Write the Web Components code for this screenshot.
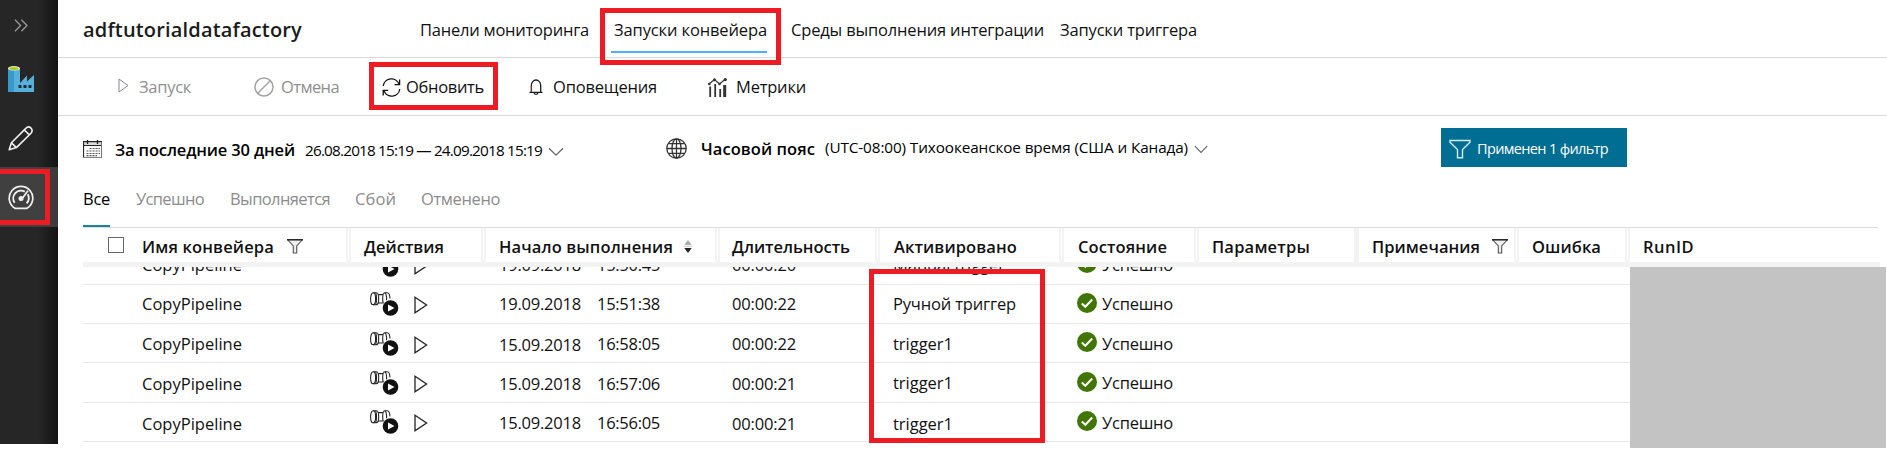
<!DOCTYPE html>
<html lang="ru">
<head>
<meta charset="utf-8">
<title>adftutorialdatafactory</title>
<style>
html,body{margin:0;height:451px;background:#fff;overflow:hidden}
body{font:16.5px/20px "Open Sans","Noto Sans",sans-serif;color:#111}
</style>
</head>
<body>
<adf-app></adf-app>
<script>
const ICONS = {
  expand: [14,13,'<path d="M1 .7l5.6 5.8L1 12.3M7.4.7l5.6 5.8-5.6 5.8" fill="none" stroke="#999" stroke-width="1.3"/>'],
  factory: [26,26,'<path d="M0 2h12v15l7-7.5v6L26 9v17H0z" fill="#55b1dc"/><path d="M0 2h6v24H0z" fill="#3a99cb"/><ellipse cx="6" cy="2.3" rx="6" ry="2.3" fill="#e6efe0"/><ellipse cx="6" cy="2.4" rx="4.6" ry="1.5" fill="#a8d108"/><path d="M10.5 19h3v3h-3zm5 0h3v3h-3zm5 0h3v3h-3z" fill="#1d2b33"/>'],
  pencil: [26,25,'<path d="M1.2 23.8l2.2-7L17.8 2.4c1.6-1.7 3.7-1.7 5.2-.3s1.5 3.6 0 5.100L8.400 21.600zM3.400 16.800l5 4.800M16.300 4l5.100 4.800" fill="none" stroke="#f0f0f0" stroke-width="1.600" stroke-linejoin="round"/>'],
  gauge: [26,25,'<path d="M7 23.300a11.800 11.800 0 1 1 12 0z" fill="none" stroke="#f0f0f0" stroke-width="1.700"/><path d="M6.600 17.800a7.800 7.800 0 0 1 10.200-11.200M19.800 9.300a7.800 7.800 0 0 1-1.200 9" fill="none" stroke="#f0f0f0" stroke-width="1.900"/><path d="M20 5.800l-6.200 8.200" stroke="#f0f0f0" stroke-width="1.800"/><circle cx="13" cy="13.600" r="2.500" fill="#f0f0f0"/>'],
  run: [11,15,'<path d="M1 1l9 6.500L1 14z" fill="none" stroke="#7f8a94" stroke-width="1"/>'],
  ban: [20,20,'<circle cx="10" cy="10" r="9" fill="none" stroke="#a3a3a3" stroke-width="1.500"/><path d="M3.800 16.200L16.200 3.800" stroke="#a3a3a3" stroke-width="1.400"/>'],
  refresh: [19,19,'<path d="M1.200 8A8.200 8.200 0 0 1 17 6.200M17.800 11A8.200 8.200 0 0 1 2 12.800M17.600 1.500v5.200h-5M1.200 17.500v-5.200h5" fill="none" stroke="#111" stroke-width="1.300"/>'],
  bell: [14,16,'<path d="M.5 13.300h13M2.300 13V6.600a4.700 5.600 0 0 1 9.400 0V13M5 13.800a2 1.500 0 0 0 4 0" fill="none" stroke="#1b1b2b" stroke-width="1.300"/><path d="M3 13V7" stroke="#f0a060" stroke-width=".5"/>'],
  metrics: [19,19,'<path d="M2.200 8.500V19M7.200 6V19M12.200 11V19" stroke="#333" stroke-width="1.800"/><path d="M16.700 7V19" stroke="#333" stroke-width="3"/><path d="M1 6l5.500-4.500L11.500 6 17.500 1" fill="none" stroke="#333" stroke-width="1.200"/><circle cx="6.500" cy="1.700" r="1.500" fill="#333"/><circle cx="11.500" cy="6" r="1.300" fill="#333"/><circle cx="17.300" cy="1.600" r="1.600" fill="#333"/><circle cx="1.300" cy="6" r="1.300" fill="#333"/>'],
  calendar: [19,18,'<path d="M0 2h19v3.500H0z" fill="#ddd"/><path d="M.5 17.500v-16M0 1.700h19M0 5.500h19" stroke="#222" stroke-width="1.200" fill="none"/><path d="M18.500 2v16M1 17.400h18" stroke="#777" fill="none"/><path d="M4.500 0v4M14.500 0v4" stroke="#222" stroke-width="1.400"/><path d="M6.500 8.500H17M3.500 11H17M3.500 13.500H17M3.500 15.700H14" stroke="#555" stroke-width="1.200" stroke-dasharray="2 1"/>'],
  globe: [21,21,'<g fill="none" stroke="#333" stroke-width="1.300"><circle cx="10.500" cy="10.500" r="9.700"/><ellipse cx="10.500" cy="10.500" rx="4.500" ry="9.700"/><path d="M10.500 1v19M1 10.500h19M2.500 5.700h16M2.500 15.300h16"/></g>'],
  chevron: [16,10,'<path d="M1 1.200l7 7 7-7" fill="none" stroke="#666" stroke-width="1.300"/>'],
  filterwhite: [22,20,'<path d="M1 1.500h20v1.700l-7.500 7.300v8.300h-5v-8.300L1 3.200z" fill="none" stroke="#d9ecf3" stroke-width="1.400"/>'],
  filter: [16,15,'<path d="M.8 1l5.500 6v7h3.400V7l5.500-6" fill="#ddd" fill-opacity=".5" stroke="#555" stroke-width="1.100"/><path d="M0 .8h16" stroke="#111" stroke-width="1.400"/>'],
  sort: [8,13,'<path d="M4 0l3.700 5H.3z" fill="#aaa"/><path d="M0 6.400h8" stroke="#ccc"/><path d="M.3 8h7.400L4 13z" fill="#222"/>'],
  activity: [29,25,'<g fill="none" stroke="#222" stroke-width="1.100"><ellipse cx="3.100" cy="6.800" rx="2.500" ry="6"/><path d="M3.100.8h3.200c1.600 0 2.400 3 2.400 6s-.8 6-2.400 6H3.100M5.700 1.200c1 1.400 1.200 9.200 0 11.200M8.700 2.600h4.500M8.700 11h4M15.600 12.800h-1.200c-1-.8-1.700-3-1.700-6s.7-6 1.900-6h2.700c1.500 0 2.500 2.700 2.700 5.600M14.900.9c1.500 1.200 1.900 4 1.600 7.500"/></g><circle cx="20.500" cy="16" r="8.600" fill="#fff"/><circle cx="20.500" cy="16" r="7.800" fill="#111"/><path d="M18 12.400l6.500 3.600-6.500 3.600z" fill="#fff"/>'],
  play: [14,18,'<path d="M1 1.200l11.600 7.800L1 16.800z" fill="none" stroke="#222" stroke-width="1.300"/>'],
  ok: [20,20,'<circle cx="10" cy="10" r="10" fill="#417505"/><path d="M4.800 10.500l3.500 3.300 6.900-7.300" fill="none" stroke="#fff" stroke-width="2"/>']
};

class AdfIcon extends HTMLElement {
  connectedCallback() {
    const [w,h,body] = ICONS[this.getAttribute('name')];
    const W = this.getAttribute('w') || w, H = this.getAttribute('h') || h;
    this.attachShadow({mode:'open'}).innerHTML =
      `<style>:host{display:block;flex:none;width:${W}px;height:${H}px}svg{display:block}</style>
       <svg width="${W}" height="${H}" viewBox="0 0 ${w} ${h}" preserveAspectRatio="none">${body}</svg>`;
  }
}

/* Single-line label that tracks its letters to fill the width given in "w". */
class AdfText extends HTMLElement {
  connectedCallback() {
    const w = +this.getAttribute('w');
    this.attachShadow({mode:'open'}).innerHTML =
      `<style>:host{display:block;flex:none;width:${w}px;height:20px;line-height:20px;white-space:nowrap}span{display:inline-block}</style><span><slot></slot></span>`;
    const span = this.shadowRoot.querySelector('span');
    const n = this.textContent.length;
    span.style.letterSpacing = ((w - span.getBoundingClientRect().width) / n).toFixed(3) + 'px';
  }
}

/* Red rectangle drawn over the content it marks. */
class AdfCallout extends HTMLElement {
  connectedCallback() {
    this.attachShadow({mode:'open'}).innerHTML =
      '<style>:host{position:absolute;box-sizing:border-box;border:5px solid #ed1c24;z-index:5;pointer-events:none}</style>';
  }
}

const define = (name, html) => customElements.define(name, class extends HTMLElement {
  connectedCallback() { this.attachShadow({mode:'open'}).innerHTML = html; }
});

define('adf-sidebar', `
<style>
:host{display:block;position:relative;width:58px;height:444px;background:linear-gradient(90deg,#262626 38px,#191919 52px,#141414)}
nav{display:flex;flex-direction:column}
.i{box-sizing:border-box;padding-left:8px}
.a{background:linear-gradient(90deg,#404040 40px,#3a3a3a)}
adf-callout{left:-5px;top:169px;width:55px;height:56px}
</style>
<nav>
<div class="i" style="height:53px;padding:19px 0 0 14px"><adf-icon name="expand"></adf-icon></div>
<div class="i" style="height:60px;padding-top:13px"><adf-icon name="factory"></adf-icon></div>
<div class="i" style="height:54px;padding-top:13px"><adf-icon name="pencil"></adf-icon></div>
<div class="i a" style="height:60px;padding-top:18px"><adf-icon name="gauge"></adf-icon></div>
</nav>
<adf-callout></adf-callout>`);

define('adf-header', `
<style>
:host{display:flex;position:relative;box-sizing:border-box;height:58px;border-bottom:1px solid #d9d9d9;padding:20px 0 0 25px;color:#111}
.t{font-size:20px;font-weight:600;color:#1b1b1b}
.u{position:relative}
.u::after{content:"";position:absolute;left:-3px;top:31px;width:156px;height:2px;background:#4baeff}
adf-callout{left:542px;top:8px;width:181px;height:57px}
</style>
<adf-text class="t" w="219">adftutorialdatafactory</adf-text>
<adf-text style="margin-left:118px" w="169">Панели мониторинга</adf-text>
<adf-text class="u" style="margin-left:25px" w="153">Запуски конвейера</adf-text>
<adf-text style="margin-left:24px" w="253">Среды выполнения интеграции</adf-text>
<adf-text style="margin-left:16px" w="137">Запуски триггера</adf-text>
<adf-callout></adf-callout>`);

define('adf-toolbar', `
<style>
:host{display:flex;position:relative;box-sizing:border-box;height:58px;border-bottom:1px solid #d9d9d9;padding:19px 0 0 60px}
.d{color:#8f8f8f}
adf-callout{left:311px;top:4px;width:129px;height:48px}
</style>
<adf-icon name="run" style="margin-top:1px"></adf-icon>
<adf-text class="d" style="margin-left:10px" w="52">Запуск</adf-text>
<adf-icon name="ban" style="margin-left:63px"></adf-icon>
<adf-text class="d" style="margin-left:7px" w="58">Отмена</adf-text>
<adf-icon name="refresh" style="margin:1px 0 0 43px"></adf-icon>
<adf-text style="margin-left:5px" w="78">Обновить</adf-text>
<adf-icon name="bell" style="margin:2px 0 0 45px"></adf-icon>
<adf-text style="margin-left:10px" w="104">Оповещения</adf-text>
<adf-icon name="metrics" style="margin:1px 0 0 51px"></adf-icon>
<adf-text style="margin-left:9px" w="70">Метрики</adf-text>
<adf-callout></adf-callout>`);

define('adf-filters', `
<style>
:host{display:flex;box-sizing:border-box;height:73px;padding:12px 0 0 25px;color:#000}
b{display:contents;font-weight:600}
.s{font-size:15.300px}
.btn{display:flex;flex:none;box-sizing:border-box;width:186px;height:39px;background:#006d92;color:#fff;font-size:14.500px;padding:11px 0 0 8px;margin-left:233px}
</style>
<adf-icon name="calendar" style="margin-top:12px"></adf-icon>
<b><adf-text style="margin:12px 0 0 13px" w="180">За последние 30 дней</adf-text></b>
<adf-text class="s" style="margin:12px 0 0 10px" w="237">26.08.2018 15:19 — 24.09.2018 15:19</adf-text>
<adf-icon name="chevron" style="margin:19px 0 0 6px"></adf-icon>
<adf-icon name="globe" style="margin:10px 0 0 102px"></adf-icon>
<b><adf-text style="margin:11px 0 0 14px" w="114">Часовой пояс</adf-text></b>
<adf-text class="s" style="margin:9px 0 0 10px" w="363">(UTC-08:00) Тихоокеанское время (США и Канада)</adf-text>
<adf-icon name="chevron" w="14" h="9" style="margin:17px 0 0 6px"></adf-icon>
<div class="btn"><adf-icon name="filterwhite"></adf-icon><adf-text style="margin-left:6px" w="131">Применен 1 фильтр</adf-text></div>`);

define('adf-tabs', `
<style>
:host{display:flex;box-sizing:border-box;height:39px;margin:0 9px 0 25px;border-bottom:1px solid #dcdcdc;color:#8c8c8c}
.a{position:relative;color:#000}
.a::after{content:"";position:absolute;left:0;top:36px;width:27px;height:2px;background:#1782a5}
</style>
<adf-text class="a" w="27">Все</adf-text>
<adf-text style="margin-left:26px" w="68">Успешно</adf-text>
<adf-text style="margin-left:26px" w="100">Выполняется</adf-text>
<adf-text style="margin-left:25px" w="41">Сбой</adf-text>
<adf-text style="margin-left:25px" w="79">Отменено</adf-text>`);

const COLS = 'grid-template-columns:268px 135px 234px 160px 184px 135px 160px 160px 111px 250px';

define('adf-grid-head', `
<style>
:host{display:grid;${COLS};box-sizing:border-box;width:1797px;height:39px;border-bottom:5px solid #f3f3f3;font-weight:600;color:#111}
div{display:flex;padding:9px 0 0 13px;border-right:5px solid #f3f3f3;position:relative}
div:not(.s)::after{content:"";position:absolute;right:-3px;top:0;bottom:2px;width:1px;background:#fff}
div:last-child{border:0}
i{flex:none;box-sizing:border-box;width:16px;height:16px;border:1px solid #666;margin:0 18px 0 12px}
</style>
<div><i></i><adf-text w="132">Имя конвейера</adf-text><adf-icon name="filter" style="margin:2px 0 0 13px"></adf-icon></div>
<div><adf-text w="80">Действия</adf-text></div>
<div><adf-text w="174">Начало выполнения</adf-text><adf-icon name="sort" style="margin:3px 0 0 11px"></adf-icon></div>
<div style="padding-left:12px"><adf-text w="118">Длительность</adf-text></div>
<div style="padding-left:14px"><adf-text w="123">Активировано</adf-text></div>
<div style="padding-left:14px"><adf-text w="89">Состояние</adf-text></div>
<div class="s"><adf-text w="98">Параметры</adf-text></div>
<div><adf-text w="108">Примечания</adf-text><adf-icon name="filter" style="margin:2px 0 0 12px"></adf-icon></div>
<div><adf-text w="69">Ошибка</adf-text></div>
<div><adf-text w="51">RunID</adf-text></div>`);

class AdfRun extends HTMLElement {
  connectedCallback() {
    const a = n => this.getAttribute(n);
    const [h,name,act,date,dur,trig,ok,stat,time] = a('metrics').split(' ');
    this.attachShadow({mode:'open'}).innerHTML = `
<style>
:host{display:grid;${COLS};box-sizing:border-box;width:1797px;height:${h}px;border-bottom:1px solid #e8e8e8;color:#111}
div{display:flex;align-items:flex-start}
</style>
<div style="padding:${name}px 0 0 59px"><adf-text w="100">CopyPipeline</adf-text></div>
<div style="padding:${act}px 0 0 19px"><adf-icon name="activity"></adf-icon><adf-icon name="play" style="margin:4px 0 0 15px"></adf-icon></div>
<div style="padding:${date}px 0 0 13px"><adf-text w="82">${a('date')}</adf-text><adf-text style="margin:${time-date}px 0 0 16px" w="63">${a('time')}</adf-text></div>
<div style="padding:${dur}px 0 0 12px"><adf-text w="64">${a('duration')}</adf-text></div>
<div style="padding:${trig}px 0 0 13px"><adf-text w="${a('tw')}">${a('trigger')}</adf-text></div>
<div style="padding:${ok}px 0 0 13px"><adf-icon name="ok"></adf-icon><adf-text style="margin:${stat-ok}px 0 0 5px" w="71">Успешно</adf-text></div>`;
  }
}
customElements.define('adf-run', AdfRun);

define('adf-runs', `
<style>
:host{display:block;position:relative;margin-left:25px;height:184px;overflow:hidden}
.rows{display:flex;flex-direction:column;margin-top:-22px}
.mask{position:absolute;left:1547px;top:0;width:256px;height:181px;background:#c3c3c3}
</style>
<div class="rows">
<adf-run metrics="40 10 8 10 10 10 8 10 10" date="19.09.2018" time="15:50:45" duration="00:00:20" trigger="Manual trigger" tw="112"></adf-run>
<adf-run metrics="39 9 7 9 9 9 8 9 9" date="19.09.2018" time="15:51:38" duration="00:00:22" trigger="Ручной триггер" tw="123"></adf-run>
<adf-run metrics="39 10 8 11 10 10 8 10 10" date="15.09.2018" time="16:58:05" duration="00:00:22" trigger="trigger1" tw="60"></adf-run>
<adf-run metrics="40 11 8 11 11 10 9 10 11" date="15.09.2018" time="16:57:06" duration="00:00:21" trigger="trigger1" tw="60"></adf-run>
<adf-run metrics="39 11 7 10 11 11 8 10 10" date="15.09.2018" time="16:56:05" duration="00:00:21" trigger="trigger1" tw="60"></adf-run>
</div>
<div class="mask"></div>`);

define('adf-app', `
<style>
:host{display:grid;position:relative;grid-template-columns:58px 1829px;width:1887px;height:451px;background:#fff}
main{display:flex;flex-direction:column}
adf-grid-head{margin-left:25px}
adf-callout{left:869px;top:269px;width:176px;height:174px}
</style>
<adf-sidebar></adf-sidebar>
<main>
<adf-header></adf-header>
<adf-toolbar></adf-toolbar>
<adf-filters></adf-filters>
<adf-tabs></adf-tabs>
<adf-grid-head></adf-grid-head>
<adf-runs></adf-runs>
</main>
<adf-callout></adf-callout>`);

customElements.define('adf-callout', AdfCallout);
customElements.define('adf-icon', AdfIcon);
customElements.define('adf-text', AdfText);
</script>
</body>
</html>
